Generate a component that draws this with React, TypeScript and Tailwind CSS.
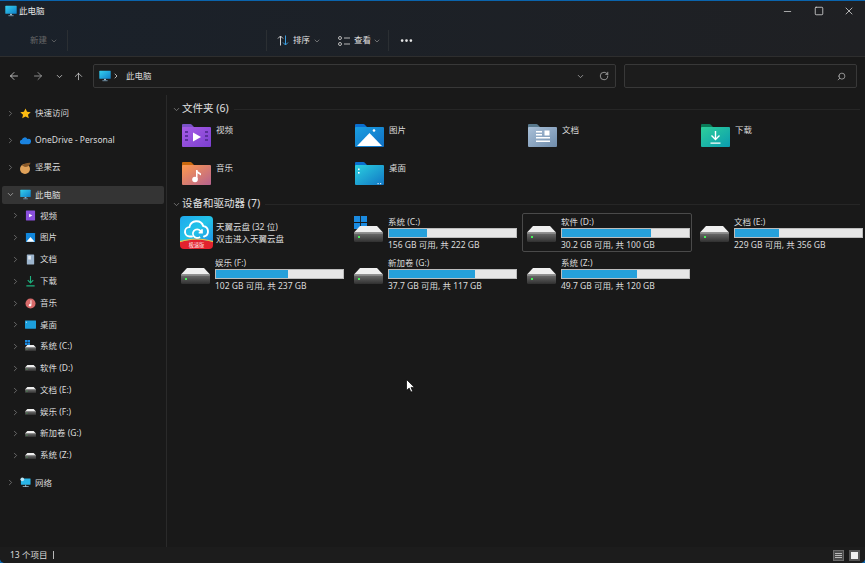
import { useId, type ReactNode } from 'react';
import { ArrowLeft, ArrowRight, ArrowUp, ChevronDown, ChevronRight, Minus, MoreHorizontal, RotateCw, Search, Square, X } from 'lucide-react';

const MonitorIcon = ({ className }: { className: string }) => {
  const id = useId();
  return (
    <svg viewBox="0 0 12 12" className={className}>
      <defs>
        <linearGradient id={id} x1="0" y1="0" x2="1" y2="1">
          <stop offset="0" stopColor="#35d0ee" />
          <stop offset="1" stopColor="#0f7fc9" />
        </linearGradient>
      </defs>
      <rect x="0.3" y="0.8" width="11.4" height="8" rx="0.6" fill={`url(#${id})`} />
      <rect x="5" y="8.8" width="2" height="1.5" fill="#9fb4c2" />
      <rect x="3.4" y="10.2" width="5.2" height="1" fill="#6b8aa0" />
    </svg>
  );
};

// big library folders, glyph is drawn on top of the folder body
const Folder = ({ tab, from, to, children }: { tab: string; from: string; to: string; children?: ReactNode }) => {
  const id = useId();
  return (
    <svg viewBox="0 0 29 23" className="w-[29px] h-[23px] shrink-0">
      <defs>
        <linearGradient id={id} x1="0" y1="0" x2="1" y2="1">
          <stop offset="0" stopColor={from} />
          <stop offset="1" stopColor={to} />
        </linearGradient>
      </defs>
      <path d="M0 1.2C0 .5.5 0 1.2 0h7.2c.5 0 .9.2 1.2.5L12 3h16v4H0z" fill={tab} />
      <rect x="0" y="3" width="29" height="20" rx="1" fill={`url(#${id})`} />
      {children}
    </svg>
  );
};

const folderIcons: Record<string, ReactNode> = {
  视频: (
    <Folder tab="#7a52c7" from="#a75ce6" to="#7b3fd0">
      <path d="M11 8.500v9l8-4.500z" fill="#fff" />
      <path d="M3 7h3v2H3zM3 11h3v2H3zM3 15h3v2H3zM23 7h3v2h-3zM23 11h3v2h-3zM23 15h3v2h-3z" fill="#5a2f9c" />
    </Folder>
  ),
  图片: (
    <Folder tab="#0a6ecf" from="#1a9fe2" to="#0f6fc4">
      <path d="M2 22L14.500 9 27 22z" fill="#fff" />
      <circle cx="19" cy="6.500" r="1.300" fill="#fff" />
    </Folder>
  ),
  文档: (
    <Folder tab="#58788c" from="#a9c0d8" to="#6f8cab">
      <path d="M8 7h6v1.400H8zM8 10h6v1.400H8zM8 13h14v1.400H8zM8 16.500h14v1.400H8z" fill="#fff" />
      <rect x="16.500" y="6.500" width="5" height="5" fill="#fff" />
    </Folder>
  ),
  下载: (
    <Folder tab="#0b7a58" from="#2ed09a" to="#0a9bb0">
      <path d="M13.800 7h1.400v8h-1.400z" fill="#fff" />
      <path d="M10.500 11.500l4 4 4-4" fill="none" stroke="#fff" strokeWidth="1.400" />
      <path d="M9.500 18.500h10v1.300h-10z" fill="#fff" />
    </Folder>
  ),
  音乐: (
    <Folder tab="#c9690f" from="#ff9a4d" to="#b5628f">
      <path d="M14 8h1.500v9h-1.500z" fill="#fff" />
      <circle cx="13" cy="17.500" r="2.800" fill="#fff" />
      <path d="M15 8c.5 2 3 2.200 4 3.500v2c-1.200-1.300-3.500-1.500-4-3z" fill="#fff" />
    </Folder>
  ),
  桌面: (
    <Folder tab="#0a6ecf" from="#2bd0e0" to="#1176c4">
      <rect x="3" y="6.500" width="1.600" height="1.600" fill="#fff" />
      <rect x="3" y="10" width="1.600" height="1.600" fill="#fff" />
      <rect x="22.500" y="21" width="1.200" height="1.200" fill="#d5e8f5" />
      <rect x="25" y="21" width="1.200" height="1.200" fill="#d5e8f5" />
    </Folder>
  ),
};

const DriveIcon = ({ className }: { className: string }) => {
  const id = useId();
  return (
    <svg viewBox="0 0 29 16" className={className}>
      <defs>
        <linearGradient id={id} x1="0" y1="0" x2="0" y2="1">
          <stop offset="0" stopColor="#707070" />
          <stop offset="1" stopColor="#303030" />
        </linearGradient>
      </defs>
      <path d="M6 0h17l6 6.500H0z" fill="#efefef" />
      <rect x="0" y="6.500" width="29" height="9.500" rx="1.500" fill={`url(#${id})`} />
      <rect x="0" y="6.500" width="29" height="1" fill="#a8a8a8" />
      <rect x="4" y="10" width="2" height="2" fill="#46f058" />
    </svg>
  );
};

const WinLogo = ({ className }: { className: string }) => (
  <svg viewBox="0 0 12 12" className={className}>
    <path d="M0 0h5.600v5.600H0zM6.400 0H12v5.600H6.400zM0 6.400h5.600V12H0zM6.400 6.400H12V12H6.400z" fill="#1a8ae0" />
  </svg>
);

const CloudAppIcon = () => {
  const id = useId();
  return (
    <svg viewBox="0 0 33 33" className="w-[33px] h-[33px] shrink-0">
      <defs>
        <linearGradient id={id} x1="0" y1="0" x2="1" y2="1">
          <stop offset="0" stopColor="#1fa8ee" />
          <stop offset="0.500" stopColor="#22c4e8" />
          <stop offset="1" stopColor="#1f8fe6" />
        </linearGradient>
      </defs>
      <path d="M4 0h25a4 4 0 014 4v23H0V4a4 4 0 014-4z" fill={`url(#${id})`} />
      <path d="M0 26c11-3.500 22-3.500 33 0v3a4 4 0 01-4 4H4a4 4 0 01-4-4z" fill="#e3222e" />
      <path d="M0 25c11-3.500 22-3.500 33 0v1.200c-11-3.500-22-3.500-33 0z" fill="#f7c23c" />
      <path d="M12 20.500H10a4.700 4.700 0 01-.6-9.400 7.200 7.200 0 0113.900-1 5.300 5.300 0 01.7 10.400" fill="none" stroke="#fff" strokeWidth="1.900" strokeLinecap="round" />
      <path d="M21.300 16.500a4.300 4.300 0 10-1.200 4.300M22 13.300v3.300h-3.300" fill="none" stroke="#fff" strokeWidth="1.700" />
      <text x="16.500" y="30.800" textAnchor="middle" fontSize="5.200" fill="#ffe4e4">极速版</text>
    </svg>
  );
};

const SideIcon = ({ name }: { name: string }) => {
  const cls = 'w-[11px] h-[11px] shrink-0';
  if (name === '快速访问')
    return (
      <svg viewBox="0 0 12 12" className={cls}>
        <path d="M6 .5l1.700 3.700 4 .4-3 2.700.9 4L6 9.200l-3.600 2.100.9-4-3-2.700 4-.4z" fill="#fdbc11" />
      </svg>
    );
  if (name === 'OneDrive')
    return (
      <svg viewBox="0 0 12 8" className={cls}>
        <path d="M2.500 8a2.400 2.400 0 01-.4-4.800 3.200 3.200 0 016-.9A2.700 2.700 0 0112 4.900 3 3 0 019.500 8z" fill="#1a83e0" />
      </svg>
    );
  if (name === '坚果云')
    return (
      <svg viewBox="0 0 11 12" className="w-[11px] h-[12px] shrink-0">
        <ellipse cx="5" cy="7" rx="5" ry="5" fill="#e0a25a" />
        <path d="M2 3.500c1.500-2 5-3 8.500-2.800C10 3 8 5 5 5z" fill="#8a5a2a" />
      </svg>
    );
  if (name === '此电脑') return <MonitorIcon className={cls} />;
  if (name === '网络')
    return (
      <svg viewBox="0 0 12 12" className={cls}>
        <rect x="1" y="1.500" width="10.500" height="7" rx="0.500" fill="#29b6e8" />
        <circle cx="2.500" cy="2.500" r="2" fill="#bfe6f5" />
        <path d="M5.700 8.500h1v1.500h-1zM3 10h6.500v1H3z" fill="#9fc4d6" />
      </svg>
    );
  if (name === '视频')
    return (
      <svg viewBox="0 0 12 12" className={cls}>
        <rect x="1" y="0.500" width="10" height="11" rx="0.500" fill="#8a4fdc" />
        <path d="M4.500 4v4l3.500-2z" fill="#fff" />
      </svg>
    );
  if (name === '图片')
    return (
      <svg viewBox="0 0 12 12" className={cls}>
        <rect x="1" y="1" width="10" height="10" rx="0.500" fill="#1187dc" />
        <path d="M1.500 10.500l4.500-5 4.500 5z" fill="#fff" />
      </svg>
    );
  if (name === '文档')
    return (
      <svg viewBox="0 0 12 12" className={cls}>
        <rect x="2" y="0.500" width="8" height="11" rx="0.500" fill="#9db5cd" />
        <rect x="3.500" y="2" width="3" height="4" fill="#dfe8f0" />
      </svg>
    );
  if (name === '下载')
    return (
      <svg viewBox="0 0 12 12" className={cls}>
        <path d="M5.400 0h1.200v6.500H5.400zM1.500 10h9v1.400h-9z" fill="#1db27f" />
        <path d="M3 4.500l3 3 3-3" fill="none" stroke="#1db27f" strokeWidth="1.200" />
      </svg>
    );
  if (name === '音乐')
    return (
      <svg viewBox="0 0 12 12" className={cls}>
        <circle cx="6" cy="6" r="5.500" fill="#d76a6a" />
        <path d="M6 2.500h1v5H6z" fill="#fff" />
        <circle cx="5.500" cy="7.800" r="1.300" fill="#fff" />
      </svg>
    );
  if (name === '桌面')
    return (
      <svg viewBox="0 0 12 9" className={cls}>
        <rect x="0" y="0" width="12" height="9" rx="0.500" fill="#1c9fdc" />
        <rect x="1" y="1.500" width="1" height="1" fill="#fff" />
      </svg>
    );
  if (name === '系统 (C:)')
    return (
      <span className="relative w-[11px] h-[11px] shrink-0">
        <WinLogo className="absolute left-0 -top-[1px] w-[5px] h-[5px]" />
        <DriveIcon className="absolute left-0 top-[4px] w-[11px] h-[6px]" />
      </span>
    );
  return <DriveIcon className="w-[11px] h-[6px] shrink-0" />;
};

const sideRows = [
  { name: '快速访问', gap: true },
  { name: 'OneDrive', label: 'OneDrive - Personal', gap: true },
  { name: '坚果云', gap: true },
  { name: '此电脑', open: true, active: true },
  { name: '视频', sub: true },
  { name: '图片', sub: true },
  { name: '文档', sub: true },
  { name: '下载', sub: true },
  { name: '音乐', sub: true },
  { name: '桌面', sub: true },
  { name: '系统 (C:)', sub: true },
  { name: '软件 (D:)', sub: true },
  { name: '文档 (E:)', sub: true },
  { name: '娱乐 (F:)', sub: true },
  { name: '新加卷 (G:)', sub: true },
  { name: '系统 (Z:)', sub: true, gap: true },
  { name: '网络' },
];

const folders = ['视频', '图片', '文档', '下载', '音乐', '桌面'];

const drives = [
  { name: '系统 (C:)', used: 30, info: '156 GB 可用, 共 222 GB', win: true },
  { name: '软件 (D:)', used: 70, info: '30.2 GB 可用, 共 100 GB', selected: true },
  { name: '文档 (E:)', used: 35, info: '229 GB 可用, 共 356 GB' },
  { name: '娱乐 (F:)', used: 57, info: '102 GB 可用, 共 237 GB' },
  { name: '新加卷 (G:)', used: 68, info: '37.7 GB 可用, 共 117 GB' },
  { name: '系统 (Z:)', used: 59, info: '49.7 GB 可用, 共 120 GB' },
];

const SectionHeader = ({ title }: { title: string }) => (
  <div className="flex items-center h-[16px] pl-[2px]">
    <ChevronDown className="w-[9px] h-[9px] text-[#8a8a8a] shrink-0" />
    <span className="ml-[1px] text-[10.5px] text-[#e0e0e0] whitespace-nowrap">{title}</span>
    <div className="ml-[5px] mr-[5px] h-px flex-1 bg-[#262626]" />
  </div>
);

const Separator = () => <div className="w-px h-[21px] bg-[#2b2f33]" />;

export default function App() {
  return (
    <div
      className="relative w-[865px] h-[563px] bg-[#0a64ad] pt-px overflow-hidden text-[8.5px] text-[#dcdcdc]"
      style={{ fontFamily: '"Noto Sans", "Noto Sans CJK SC", sans-serif' }}
    >
      <div className="flex flex-col h-[562px] bg-[#191919] rounded-b-[5px] overflow-hidden">
        {/* title + command bar */}
        <div className="h-[56px] shrink-0 bg-gradient-to-r from-[#1a212a] to-[#1f2023] border-b border-[#2e2e2e]">
          <div className="flex items-center h-[20px] pl-[5px]">
            <MonitorIcon className="w-[12px] h-[12px]" />
            <span className="ml-[2px] text-[#e6e6e6]">此电脑</span>
            <div className="ml-auto flex items-center text-[#e4e4e4]">
              <div className="w-[31px] flex justify-center pr-[3px]"><Minus className="w-[11px] h-[11px]" strokeWidth={1.5} /></div>
              <div className="w-[30px] flex justify-center"><Square className="w-[10px] h-[10px]" strokeWidth={1.8} /></div>
              <div className="w-[31px] flex justify-center pr-[2px]"><X className="w-[12px] h-[12px]" strokeWidth={1.5} /></div>
            </div>
          </div>
          <div className="flex items-center h-[21px] mt-[9px]">
            <span className="ml-[30px] w-[18px] text-[#686868]">新建</span>
            <ChevronDown className="ml-[2px] w-[8px] h-[8px] text-[#777777]" />
            <div className="ml-[9px]"><Separator /></div>
            <div className="ml-[198px]"><Separator /></div>
            <svg viewBox="0 0 12 11" className="ml-[10px] w-[12px] h-[11px]" fill="none" strokeWidth="1">
              <path d="M3.500 10.500V1M1 3.500L3.500 1 6 3.500" stroke="#d0d0d0" />
              <path d="M8.500.5V10M6 7.500L8.500 10 11 7.500" stroke="#3c9fe0" />
            </svg>
            <span className="ml-[4px] text-[#e0e0e0]">排序</span>
            <ChevronDown className="ml-[3px] w-[8px] h-[8px] text-[#999999]" />
            <svg viewBox="0 0 12 10" className="ml-[17px] w-[12px] h-[10px]" fill="none" stroke="#c8c8c8" strokeWidth="0.900">
              <circle cx="2" cy="2" r="1.500" />
              <circle cx="2" cy="8" r="1.500" />
              <path d="M6 2h6M6 8h6" />
            </svg>
            <span className="ml-[4px] text-[#e0e0e0]">查看</span>
            <ChevronDown className="ml-[2px] w-[8px] h-[8px] text-[#999999]" />
            <div className="ml-[7px]"><Separator /></div>
            <MoreHorizontal className="ml-[10px] w-[15px] h-[15px] text-[#e6e6e6]" strokeWidth={2.4} />
          </div>
        </div>

        {/* address row */}
        <div className="flex items-center h-[38px] shrink-0 pl-[8px] pr-[8px] text-[#d8d8d8]">
          <ArrowLeft className="w-[12px] h-[12px]" strokeWidth={1.6} />
          <ArrowRight className="ml-[12px] w-[12px] h-[12px] text-[#a8a8a8]" strokeWidth={1.6} />
          <ChevronDown className="ml-[11px] w-[9px] h-[9px]" strokeWidth={2} />
          <ArrowUp className="ml-[9px] w-[11px] h-[11px]" strokeWidth={1.6} />
          <div className="ml-[9px] flex items-center w-[523px] h-[24px] bg-[#1c1c1c] border border-[#383838] rounded-[2px] pl-[5px]">
            <MonitorIcon className="w-[12px] h-[12px]" />
            <ChevronRight className="ml-[1px] w-[8px] h-[8px]" strokeWidth={2.4} />
            <span className="ml-[6px]">此电脑</span>
            <ChevronDown className="ml-auto w-[9px] h-[9px] text-[#b0b0b0]" />
            <RotateCw className="ml-[14px] mr-[6px] w-[10px] h-[10px]" strokeWidth={1.5} />
          </div>
          <div className="ml-[8px] flex items-center justify-end w-[233px] h-[24px] bg-[#1c1c1c] border border-[#383838] rounded-[2px] pr-[10px]">
            <Search className="w-[9px] h-[9px] -scale-x-100 text-[#b8b8b8]" strokeWidth={2} />
          </div>
        </div>

        <div className="flex flex-1 min-h-0">
          {/* sidebar */}
          <div className="w-[167px] shrink-0 border-r border-[#2a2a2a] pt-[9px]">
            {sideRows.map((row) => (
              <div
                key={row.name}
                className={`flex items-center h-[18px] mr-[2px] ml-[2px] rounded-[2px] ${row.gap ? 'mb-[9.3px]' : row.active ? 'mb-[3px]' : 'mb-[3.8px]'} ${row.active ? 'bg-[#343434]' : ''}`}
              >
                {row.open ? (
                  <ChevronDown className="ml-[4px] w-[9px] h-[9px] text-[#b0b0b0] shrink-0" strokeWidth={2} />
                ) : (
                  <ChevronRight className={`${row.sub ? 'ml-[9px]' : 'ml-[4px]'} w-[9px] h-[9px] text-[#808080] shrink-0`} strokeWidth={2} />
                )}
                <div className="ml-[5px] flex items-center"><SideIcon name={row.name} /></div>
                <span className="ml-[4px] whitespace-nowrap">{row.label ?? row.name}</span>
              </div>
            ))}
          </div>

          {/* main content */}
          <div className="flex-1 min-w-0 pt-[6px] pl-[3px]">
            <SectionHeader title="文件夹 (6)" />
            <div className="grid grid-cols-[repeat(4,173px)] ml-[6px] mt-[3px]">
              {folders.map((name) => (
                <div key={name} className="flex h-[38px] pl-[6px] pt-[4px]">
                  {folderIcons[name]}
                  <span className="ml-[5px] leading-[12px]">{name}</span>
                </div>
              ))}
            </div>
            <SectionHeader title="设备和驱动器 (7)" />
            <div className="grid grid-cols-[repeat(4,173px)] gap-y-[2.500px] ml-[6px] mt-[1px]">
              <div className="flex items-center h-[39px] pl-[4px]">
                <CloudAppIcon />
                <div className="ml-[3px] leading-[12px]">
                  <div>天翼云盘 (32 位)</div>
                  <div>双击进入天翼云盘</div>
                </div>
              </div>
              {drives.map((d) => (
                <div
                  key={d.name}
                  className={`relative flex items-center h-[39px] w-[170px] pl-[4px] rounded-[2px] border ${d.selected ? 'border-[#4a4a4a]' : 'border-transparent'}`}
                >
                  {d.win && <WinLogo className="absolute left-[4px] top-[2px] w-[13px] h-[13px]" />}
                  <DriveIcon className="relative w-[29px] h-[16px] shrink-0 mt-[3px]" />
                  <div className="ml-[5px] w-[129px] leading-[11px]">
                    <div className="whitespace-nowrap">{d.name}</div>
                    <div className="h-[10px] my-[1px] bg-[#e6e6e6] border border-[#bcbcbc]">
                      <div className="h-full bg-[#26a0da]" style={{ width: `${d.used}%` }} />
                    </div>
                    <div className="whitespace-nowrap">{d.info}</div>
                  </div>
                </div>
              ))}
            </div>
          </div>
        </div>

        {/* status bar */}
        <div className="flex items-center h-[16px] shrink-0 bg-[#1c1c1c] pl-[10px] pr-[5px]">
          <span>13 个项目</span>
          <div className="ml-[6px] w-px h-[8px] bg-[#b8b8b8]" />
          <div className="ml-auto flex gap-[5px]">
            <div className="flex flex-col justify-center gap-px w-[11px] h-[11px] bg-[#4a4a4a] border border-[#6a6a6a] px-px">
              <div className="h-px bg-[#b8b8b8]" />
              <div className="h-px bg-[#b8b8b8]" />
              <div className="h-px bg-[#b8b8b8]" />
            </div>
            <div className="w-[11px] h-[11px] bg-[#f0f0f0] border-2 border-[#555555]" />
          </div>
        </div>
      </div>

      {/* mouse pointer */}
      <svg viewBox="0 0 9 14" className="absolute left-[406px] top-[379px] w-[9px] h-[14px]">
        <path d="M.5.500v11l2.700-2.400 1.700 4 1.800-.8-1.700-3.900h3.500z" fill="#fff" stroke="#000" strokeWidth="0.700" />
      </svg>
    </div>
  );
}
